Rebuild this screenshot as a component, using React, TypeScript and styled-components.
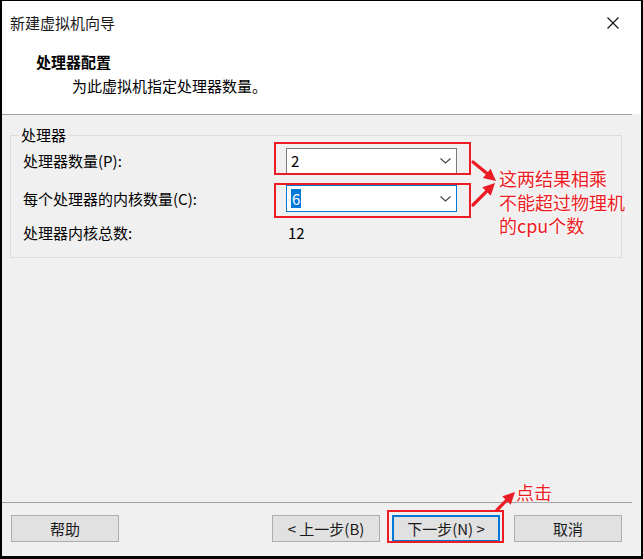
import React from "react";
import styled, { createGlobalStyle } from "styled-components";

const GlobalStyle = createGlobalStyle`
  html, body {
    margin: 0;
    padding: 0;
    background: #ffffff;
  }
  * {
    box-sizing: border-box;
  }
`;

const RED = "#ec1c24";

const Dialog = styled.div`
  position: relative;
  width: 643px;
  height: 559px;
  display: flex;
  flex-direction: column;
  border: 2px solid #000;
  border-top-width: 1px;
  border-bottom-width: 3px;
  background: #f0f0f0;
  font-family: "Noto Sans CJK SC", "Noto Sans", sans-serif;
  font-size: 15px;
  color: #000;
  overflow: hidden;
`;

const TitleBar = styled.div`
  height: 43px;
  flex: none;
  display: flex;
  align-items: center;
  justify-content: space-between;
  padding: 0 21px 0 8px;
  background: #fff;
  line-height: 20px;
  color: #1a1a1a;
`;

const CloseButton = styled.div`
  width: 14px;
  height: 14px;
  display: flex;
  align-items: center;
  justify-content: center;
`;

const Header = styled.div`
  height: 70px;
  flex: none;
  background: #fff;
  padding: 8px 0 0 34px;
`;

const HeaderTitle = styled.div`
  font-weight: 700;
  line-height: 20px;
`;

const HeaderSub = styled.div`
  margin-top: 4px;
  padding-left: 36px;
  line-height: 20px;
`;

const Divider = styled.div`
  height: 1px;
  flex: none;
  margin-right: 9px;
  background: #a0a0a0;
`;

const Body = styled.div`
  flex: 1;
  padding: 10px 19px 0 8px;
`;

const Group = styled.fieldset`
  margin: 0;
  border: 1px solid #dcdcdc;
  padding: 3px 12px 14px 12px;
`;

const Legend = styled.legend`
  padding: 0 2px;
  margin-left: -4px;
  line-height: 20px;
`;

const FieldGrid = styled.div`
  display: grid;
  grid-template-columns: 263px 171px;
  grid-template-rows: 26px 27px 20px;
  row-gap: 11px;
  align-items: center;
  line-height: 20px;
`;

const Value = styled.div`
  padding-left: 2px;
`;

const Marked = styled.div<{ $l: number; $r: number; $t: number; $b: number }>`
  position: relative;
  height: 100%;
  &::after {
    content: "";
    position: absolute;
    left: ${(p) => p.$l}px;
    right: ${(p) => p.$r}px;
    top: ${(p) => p.$t}px;
    bottom: ${(p) => p.$b}px;
    border: 2px solid ${RED};
    pointer-events: none;
  }
`;

const Combo = styled.div<{ $focused?: boolean }>`
  height: 100%;
  display: flex;
  align-items: center;
  justify-content: space-between;
  padding: 0 5px 0 4px;
  background: #fff;
  border: 1px solid ${(p) => (p.$focused ? "#0078d7" : "#7a7a7a")};
`;

const Selected = styled.span`
  background: #0078d7;
  color: #fff;
  padding: 0 1px;
  line-height: 19px;
`;

const Footer = styled.div`
  flex: none;
  display: flex;
  align-items: center;
  padding: 12px 19px 14px 9px;
`;

const Spacer = styled.div`
  flex: 1;
`;

const Button = styled.div<{ $primary?: boolean; $gap?: number }>`
  width: 108px;
  height: 27px;
  margin-left: ${(p) => p.$gap ?? 0}px;
  display: flex;
  align-items: center;
  justify-content: center;
  background: #e1e1e1;
  border: ${(p) => (p.$primary ? "2px solid #0078d7" : "1px solid #adadad")};
  line-height: 20px;
  color: #1a1a1a;
`;

const MarkedButton = styled(Marked)`
  height: 27px;
  margin-left: 12px;
`;

const Overlay = styled.svg`
  position: absolute;
  left: -2px;
  top: -1px;
  pointer-events: none;
`;

const Note = styled.div<{ $x: number; $y: number }>`
  position: absolute;
  left: ${(p) => p.$x - 2}px;
  top: ${(p) => p.$y - 1}px;
  color: ${RED};
  font-size: 18px;
  line-height: 23.5px;
  white-space: nowrap;
  text-shadow: 0 0 2px #fff, 0 0 2px #fff, 0 0 3px #fff;
`;

const Chevron = () => (
  <svg width="11" height="6" viewBox="0 0 11 6">
    <polyline points="0.5,0.5 5.5,5 10.5,0.5" fill="none" stroke="#444" strokeWidth="1.1" />
  </svg>
);

const Arrow = ({ x1, y1, x2, y2 }: { x1: number; y1: number; x2: number; y2: number }) => {
  const a = Math.atan2(y2 - y1, x2 - x1);
  const len = 12;
  const w = 6;
  const bx = x2 - len * Math.cos(a);
  const by = y2 - len * Math.sin(a);
  const px = -Math.sin(a) * w;
  const py = Math.cos(a) * w;
  return (
    <g>
      <line x1={x1} y1={y1} x2={bx} y2={by} stroke={RED} strokeWidth="3.2" strokeLinecap="round" />
      <polygon points={`${x2},${y2} ${bx + px},${by + py} ${bx - px},${by - py}`} fill={RED} />
    </g>
  );
};

export default function App() {
  return (
    <>
      <GlobalStyle />
      <Dialog>
        <TitleBar>
          新建虚拟机向导
          <CloseButton>
            <svg width="12" height="12" viewBox="0 0 12 12">
              <path d="M0.5 0.5 L11.5 11.5 M11.5 0.5 L0.5 11.5" stroke="#111" strokeWidth="1.1" />
            </svg>
          </CloseButton>
        </TitleBar>
        <Header>
          <HeaderTitle>处理器配置</HeaderTitle>
          <HeaderSub>为此虚拟机指定处理器数量。</HeaderSub>
        </Header>
        <Divider />
        <Body>
          <Group>
            <Legend>处理器</Legend>
            <FieldGrid>
              <span>处理器数量(P):</span>
              <Marked $l={-12} $r={-14} $t={-6} $b={-1}>
                <Combo>
                  <span>2</span>
                  <Chevron />
                </Combo>
              </Marked>
              <span>每个处理器的内核数量(C):</span>
              <Marked $l={-12} $r={-14} $t={-2} $b={-6}>
                <Combo $focused>
                  <Selected>6</Selected>
                  <Chevron />
                </Combo>
              </Marked>
              <span>处理器内核总数:</span>
              <Value>12</Value>
            </FieldGrid>
          </Group>
        </Body>
        <Divider />
        <Footer>
          <Button>帮助</Button>
          <Spacer />
          <Button>&lt; 上一步(B)</Button>
          <MarkedButton $l={-5} $r={-4} $t={-5} $b={-1}>
            <Button $primary>下一步(N) &gt;</Button>
          </MarkedButton>
          <Button $gap={14}>取消</Button>
        </Footer>

        <Overlay width="643" height="559" viewBox="0 0 643 559">
          <Arrow x1={473} y1={162} x2={496} y2={181} />
          <Arrow x1={473} y1={205} x2={495} y2={183} />
          <Arrow x1={497} y1={510} x2={515} y2={492} />
        </Overlay>
        <Note $x={499} $y={167}>
          这两结果相乘
          <br />
          不能超过物理机
          <br />
          的cpu个数
        </Note>
        <Note $x={516} $y={481}>点击</Note>
      </Dialog>
    </>
  );
}
